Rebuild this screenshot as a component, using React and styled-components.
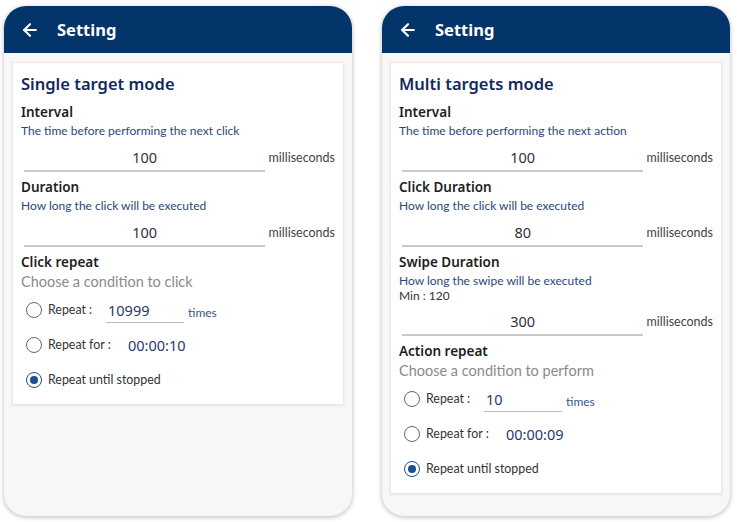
import React from "react";
import styled, { createGlobalStyle } from "styled-components";

const Global = createGlobalStyle`
  html, body { margin: 0; padding: 0; background: #ffffff; }
  body { font-family: "Noto Sans", "Lato", sans-serif; }
  * { box-sizing: border-box; }
`;

const Page = styled.div`
  width: 737px;
  height: 522px;
  display: flex;
  gap: 30px;
  padding: 6px 4px 0 4px;
  background: #ffffff;
`;

const Phone = styled.div`
  width: 348px;
  height: 510px;
  border-radius: 22px;
  background: #f7f7f7;
  box-shadow: 0 1px 5px rgba(0, 0, 0, 0.28);
  overflow: hidden;
  display: flex;
  flex-direction: column;
`;

const Header = styled.div`
  height: 47px;
  background: #03346a;
  display: flex;
  align-items: center;
  padding-left: 16px;
  gap: 17px;
  flex-shrink: 0;
`;

const HeaderTitle = styled.div`
  font-family: "Noto Sans", sans-serif;
  font-weight: 700;
  font-size: 16.5px;
  color: #ffffff;
  line-height: 20px;
`;

const Card = styled.div`
  margin: 9px 8px 0 8px;
  background: #ffffff;
  border: 1px solid #e9e9e9;
  box-shadow: 0 1px 2px rgba(0, 0, 0, 0.08);
  padding: 8px 8px 7px 8px;
  display: flex;
  flex-direction: column;
  gap: 4px;
`;

const CardTitle = styled.div`
  font-family: "Noto Sans", sans-serif;
  font-weight: 600;
  font-size: 16.5px;
  line-height: 26px;
  color: #13295a;
`;

const Section = styled.div`
  display: flex;
  flex-direction: column;
`;

const Label = styled.div`
  font-family: "Noto Sans", sans-serif;
  font-weight: 600;
  font-size: 13.5px;
  line-height: 20px;
  color: #1e1e1e;
  padding-top: 1px;
`;

const Desc = styled.div`
  font-family: "Lato", sans-serif;
  font-size: 12px;
  line-height: ${(p) => (p.$muted ? "15px" : "16px")};
  color: ${(p) => (p.$muted ? "#333333" : "#2b4878")};
  margin-top: ${(p) => (p.$muted ? "-1px" : "1px")};
`;

const Hint = styled.div`
  font-family: "Lato", sans-serif;
  font-size: 14.5px;
  line-height: 20px;
  color: #8a8a8a;
`;

const FieldRow = styled.div`
  display: flex;
  align-items: flex-end;
  padding-top: 8px;
`;

const Field = styled.div`
  width: 242px;
  margin-left: 3px;
  text-align: center;
  font-family: "Noto Sans", sans-serif;
  font-size: 14.5px;
  line-height: 20px;
  color: #2f2f3f;
  padding-bottom: 3px;
  border-bottom: 2px solid #c9c9c9;
`;

const Unit = styled.div`
  font-family: "Lato", sans-serif;
  font-size: 12.5px;
  line-height: 20px;
  color: #444444;
  margin-left: 3px;
  padding-bottom: 4px;
`;

const RadioGroup = styled.div`
  display: flex;
  flex-direction: column;
  padding-left: 5px;
`;

const RadioRow = styled.div`
  height: 35px;
  display: flex;
  align-items: center;
  gap: 6px;
`;

const RadioCircle = styled.div`
  width: 16px;
  height: 16px;
  border-radius: 50%;
  border: 1.6px solid ${(p) => (p.$on ? "#1b4f8f" : "#666666")};
  display: flex;
  align-items: center;
  justify-content: center;
  flex-shrink: 0;
  &::after {
    content: "";
    width: 8px;
    height: 8px;
    border-radius: 50%;
    background: ${(p) => (p.$on ? "#1b4f8f" : "transparent")};
  }
`;

const RadioLabel = styled.div`
  font-family: "Lato", sans-serif;
  font-size: 12.4px;
  color: #333333;
  width: ${(p) => (p.$w ? `${p.$w}px` : "auto")};
`;

const InlineInput = styled.div`
  width: 78px;
  font-family: "Noto Sans", sans-serif;
  font-size: 14.5px;
  line-height: 20px;
  color: #1d3a6b;
  padding: 0 0 2px 2px;
  border-bottom: 1.5px solid #bdbdbd;
  margin-top: 4px;
`;

const Times = styled.div`
  font-family: "Lato", sans-serif;
  font-size: 12px;
  color: #35588a;
  margin-left: -2px;
  margin-top: 6px;
`;

const TimeValue = styled.div`
  font-family: "Noto Sans", sans-serif;
  font-size: 14.5px;
  color: #1d3a6b;
`;

const BackArrow = () => (
  <svg width="20" height="20" viewBox="0 0 24 24" fill="none" stroke="#ffffff" strokeWidth="2.6" strokeLinecap="round" strokeLinejoin="round">
    <path d="m12 19-7-7 7-7" />
    <path d="M19 12H5" />
  </svg>
);

const NumberSection = ({ label, desc, extra, value }) => (
  <Section>
    <Label>{label}</Label>
    <Desc>{desc}</Desc>
    {extra && <Desc $muted>{extra}</Desc>}
    <FieldRow>
      <Field>{value}</Field>
      <Unit>milliseconds</Unit>
    </FieldRow>
  </Section>
);

const RepeatSection = ({ label, hint, times, duration, forGap }) => (
  <Section>
    <Label>{label}</Label>
    <Hint>{hint}</Hint>
    <RadioGroup>
      <RadioRow>
        <RadioCircle />
        <RadioLabel $w={52}>Repeat :</RadioLabel>
        <InlineInput>{times}</InlineInput>
        <Times>times</Times>
      </RadioRow>
      <RadioRow>
        <RadioCircle />
        <RadioLabel $w={forGap}>Repeat for :</RadioLabel>
        <TimeValue>{duration}</TimeValue>
      </RadioRow>
      <RadioRow>
        <RadioCircle $on />
        <RadioLabel>Repeat until stopped</RadioLabel>
      </RadioRow>
    </RadioGroup>
  </Section>
);

const Screen = ({ children }) => (
  <Phone>
    <Header>
      <BackArrow />
      <HeaderTitle>Setting</HeaderTitle>
    </Header>
    <Card>{children}</Card>
  </Phone>
);

export default function App() {
  return (
    <>
      <Global />
      <Page>
        <Screen>
          <CardTitle>Single target mode</CardTitle>
          <NumberSection label="Interval" desc="The time before performing the next click" value="100" />
          <NumberSection label="Duration" desc="How long the click will be executed" value="100" />
          <RepeatSection label="Click repeat" hint="Choose a condition to click" times="10999" duration="00:00:10" forGap={74} />
        </Screen>
        <Screen>
          <CardTitle>Multi targets mode</CardTitle>
          <NumberSection label="Interval" desc="The time before performing the next action" value="100" />
          <NumberSection label="Click Duration" desc="How long the click will be executed" value="80" />
          <NumberSection label="Swipe Duration" desc="How long the swipe will be executed" extra="Min : 120" value="300" />
          <RepeatSection label="Action repeat" hint="Choose a condition to perform" times="10" duration="00:00:09" forGap={74} />
        </Screen>
      </Page>
    </>
  );
}
